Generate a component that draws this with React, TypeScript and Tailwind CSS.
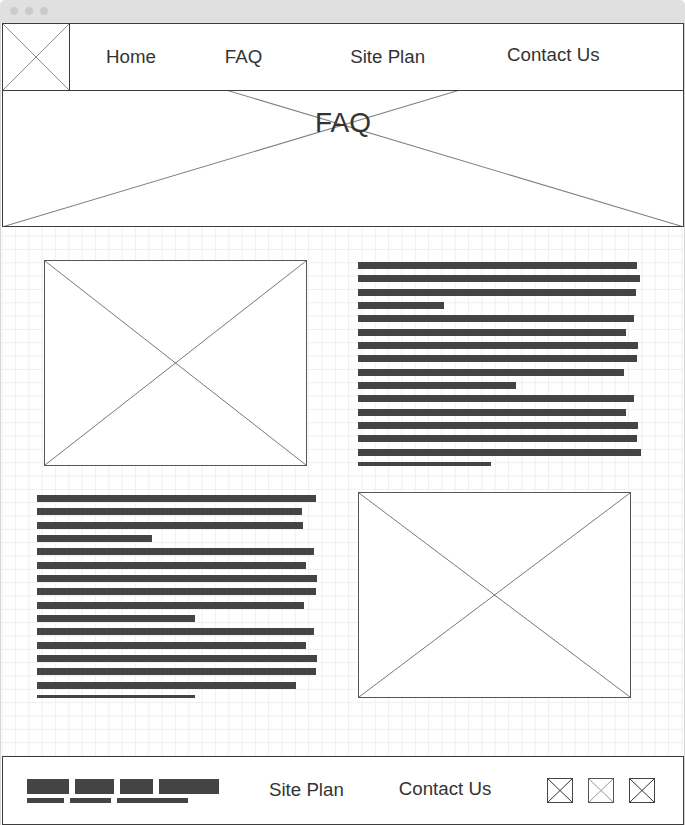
import React from 'react';

const Cross: React.FC<{ stroke?: string; width?: number }> = ({ stroke = '#555', width = 0.8 }) => (
  <svg className="absolute inset-0 h-full w-full" viewBox="0 0 100 100" preserveAspectRatio="none">
    <line x1="0" y1="0" x2="100" y2="100" stroke={stroke} strokeWidth={width} vectorEffect="non-scaling-stroke" />
    <line x1="100" y1="0" x2="0" y2="100" stroke={stroke} strokeWidth={width} vectorEffect="non-scaling-stroke" />
  </svg>
);

// bar widths in px, read off the mockup
const rightText = [279, 282, 278, 86, 276, 268, 280, 279, 266, 158, 276, 268, 280, 279, 283, 133];
const leftText = [279, 265, 266, 115, 277, 269, 280, 279, 267, 158, 277, 269, 280, 279, 259, 158];

const TextBlock: React.FC<{ widths: number[]; last: string }> = ({ widths, last }) => (
  <div className="flex flex-col gap-[6.33px]">
    {widths.map((w, i) => (
      <div
        key={i}
        className={`bg-[#444] ${i === widths.length - 1 ? last : 'h-[7px]'}`}
        style={{ width: w }}
      />
    ))}
  </div>
);

const navLinks = [
  { label: 'Home', cls: 'ml-[36px]' },
  { label: 'FAQ', cls: 'ml-[69px]' },
  { label: 'Site Plan', cls: 'ml-[88px]' },
  { label: 'Contact Us', cls: 'ml-[82px] -translate-y-[2px]' },
];

const App: React.FC = () => {
  return (
    <div className="w-[685px] h-[825px] bg-white flex flex-col font-['Liberation_Sans',Arial,sans-serif] text-[#333]">
      {/* window chrome */}
      <div className="h-[23px] shrink-0 bg-[#e0e0e0] rounded-t-[5px] flex items-center gap-[7px] pl-[10px] pb-px">
        <span className="w-[8px] h-[8px] rounded-full bg-[#cbcbcb]" />
        <span className="w-[8px] h-[8px] rounded-full bg-[#cbcbcb]" />
        <span className="w-[8px] h-[8px] rounded-full bg-[#cbcbcb]" />
      </div>

      <div className="flex-1 flex flex-col border-x border-[#d6d6d6]">
        {/* header + hero share one big placeholder cross, header sits over it */}
        <div className="relative ml-px shrink-0 bg-white">
          <Cross stroke="#808080" width={1.1} />
          <div className="relative z-10 h-[68px] border border-[#3c3c3c] bg-white flex items-center">
            <div className="relative w-[67px] h-full border-r border-[#3c3c3c] shrink-0">
              <Cross stroke="#8a8a8a" width={1} />
            </div>
            {navLinks.map(l => (
              <a key={l.label} className={`text-[18.7px] leading-none ${l.cls}`}>
                {l.label}
              </a>
            ))}
          </div>
          <div className="relative h-[136px] border-x border-b border-[#3c3c3c] flex justify-center pt-[18px]">
            <h1 className="relative text-[28px] leading-[28px] text-[#333]">FAQ</h1>
          </div>
        </div>

        {/* content */}
        <div className="flex-1 bg-white bg-[linear-gradient(to_right,#efefef_1px,transparent_1px),linear-gradient(to_bottom,#efefef_1px,transparent_1px)] bg-[size:13.333px_13.333px] bg-[position:0.67px_8.67px] pt-[33px]">
          <div className="flex items-start">
            <div className="relative ml-[43px] w-[263px] h-[206px] border border-[#555] bg-white">
              <Cross />
            </div>
            <div className="ml-[51px] mt-[2px]">
              <TextBlock widths={rightText} last="h-[4px]" />
            </div>
          </div>
          <div className="flex items-start mt-[26px]">
            <div className="ml-[36px] mt-[3px] w-[270px]">
              <TextBlock widths={leftText} last="h-[3px]" />
            </div>
            <div className="relative ml-[51px] w-[273px] h-[206px] border border-[#555] bg-white">
              <Cross />
            </div>
          </div>
        </div>

        {/* footer */}
        <div className="h-[69px] shrink-0 ml-px border border-[#3c3c3c] bg-white flex items-start">
          <div className="ml-[24px] mt-[22px] flex flex-col gap-[4px]">
            <div className="flex gap-[6px]">
              <div className="w-[42px] h-[15px] bg-[#444]" />
              <div className="w-[39px] h-[15px] bg-[#444]" />
              <div className="w-[33px] h-[15px] bg-[#444]" />
              <div className="w-[60px] h-[15px] bg-[#444]" />
            </div>
            <div className="flex gap-[6px]">
              <div className="w-[37px] h-[5px] bg-[#444]" />
              <div className="w-[41px] h-[5px] bg-[#444]" />
              <div className="w-[71px] h-[5px] bg-[#444]" />
            </div>
          </div>
          <a className="ml-[50px] mt-[24px] text-[18.7px] leading-none">Site Plan</a>
          <a className="ml-[55px] mt-[23px] text-[18.7px] leading-none">Contact Us</a>
          <div className="ml-[56px] mt-[21px] flex gap-[15px]">
            <div className="relative w-[26px] h-[25px] border border-[#444]">
              <Cross stroke="#333" width={1} />
            </div>
            <div className="relative w-[26px] h-[25px] border border-[#555]">
              <Cross stroke="#999" width={1} />
            </div>
            <div className="relative w-[26px] h-[25px] border border-[#444]">
              <Cross stroke="#333" width={1} />
            </div>
          </div>
        </div>
      </div>
    </div>
  );
};

export default App;
